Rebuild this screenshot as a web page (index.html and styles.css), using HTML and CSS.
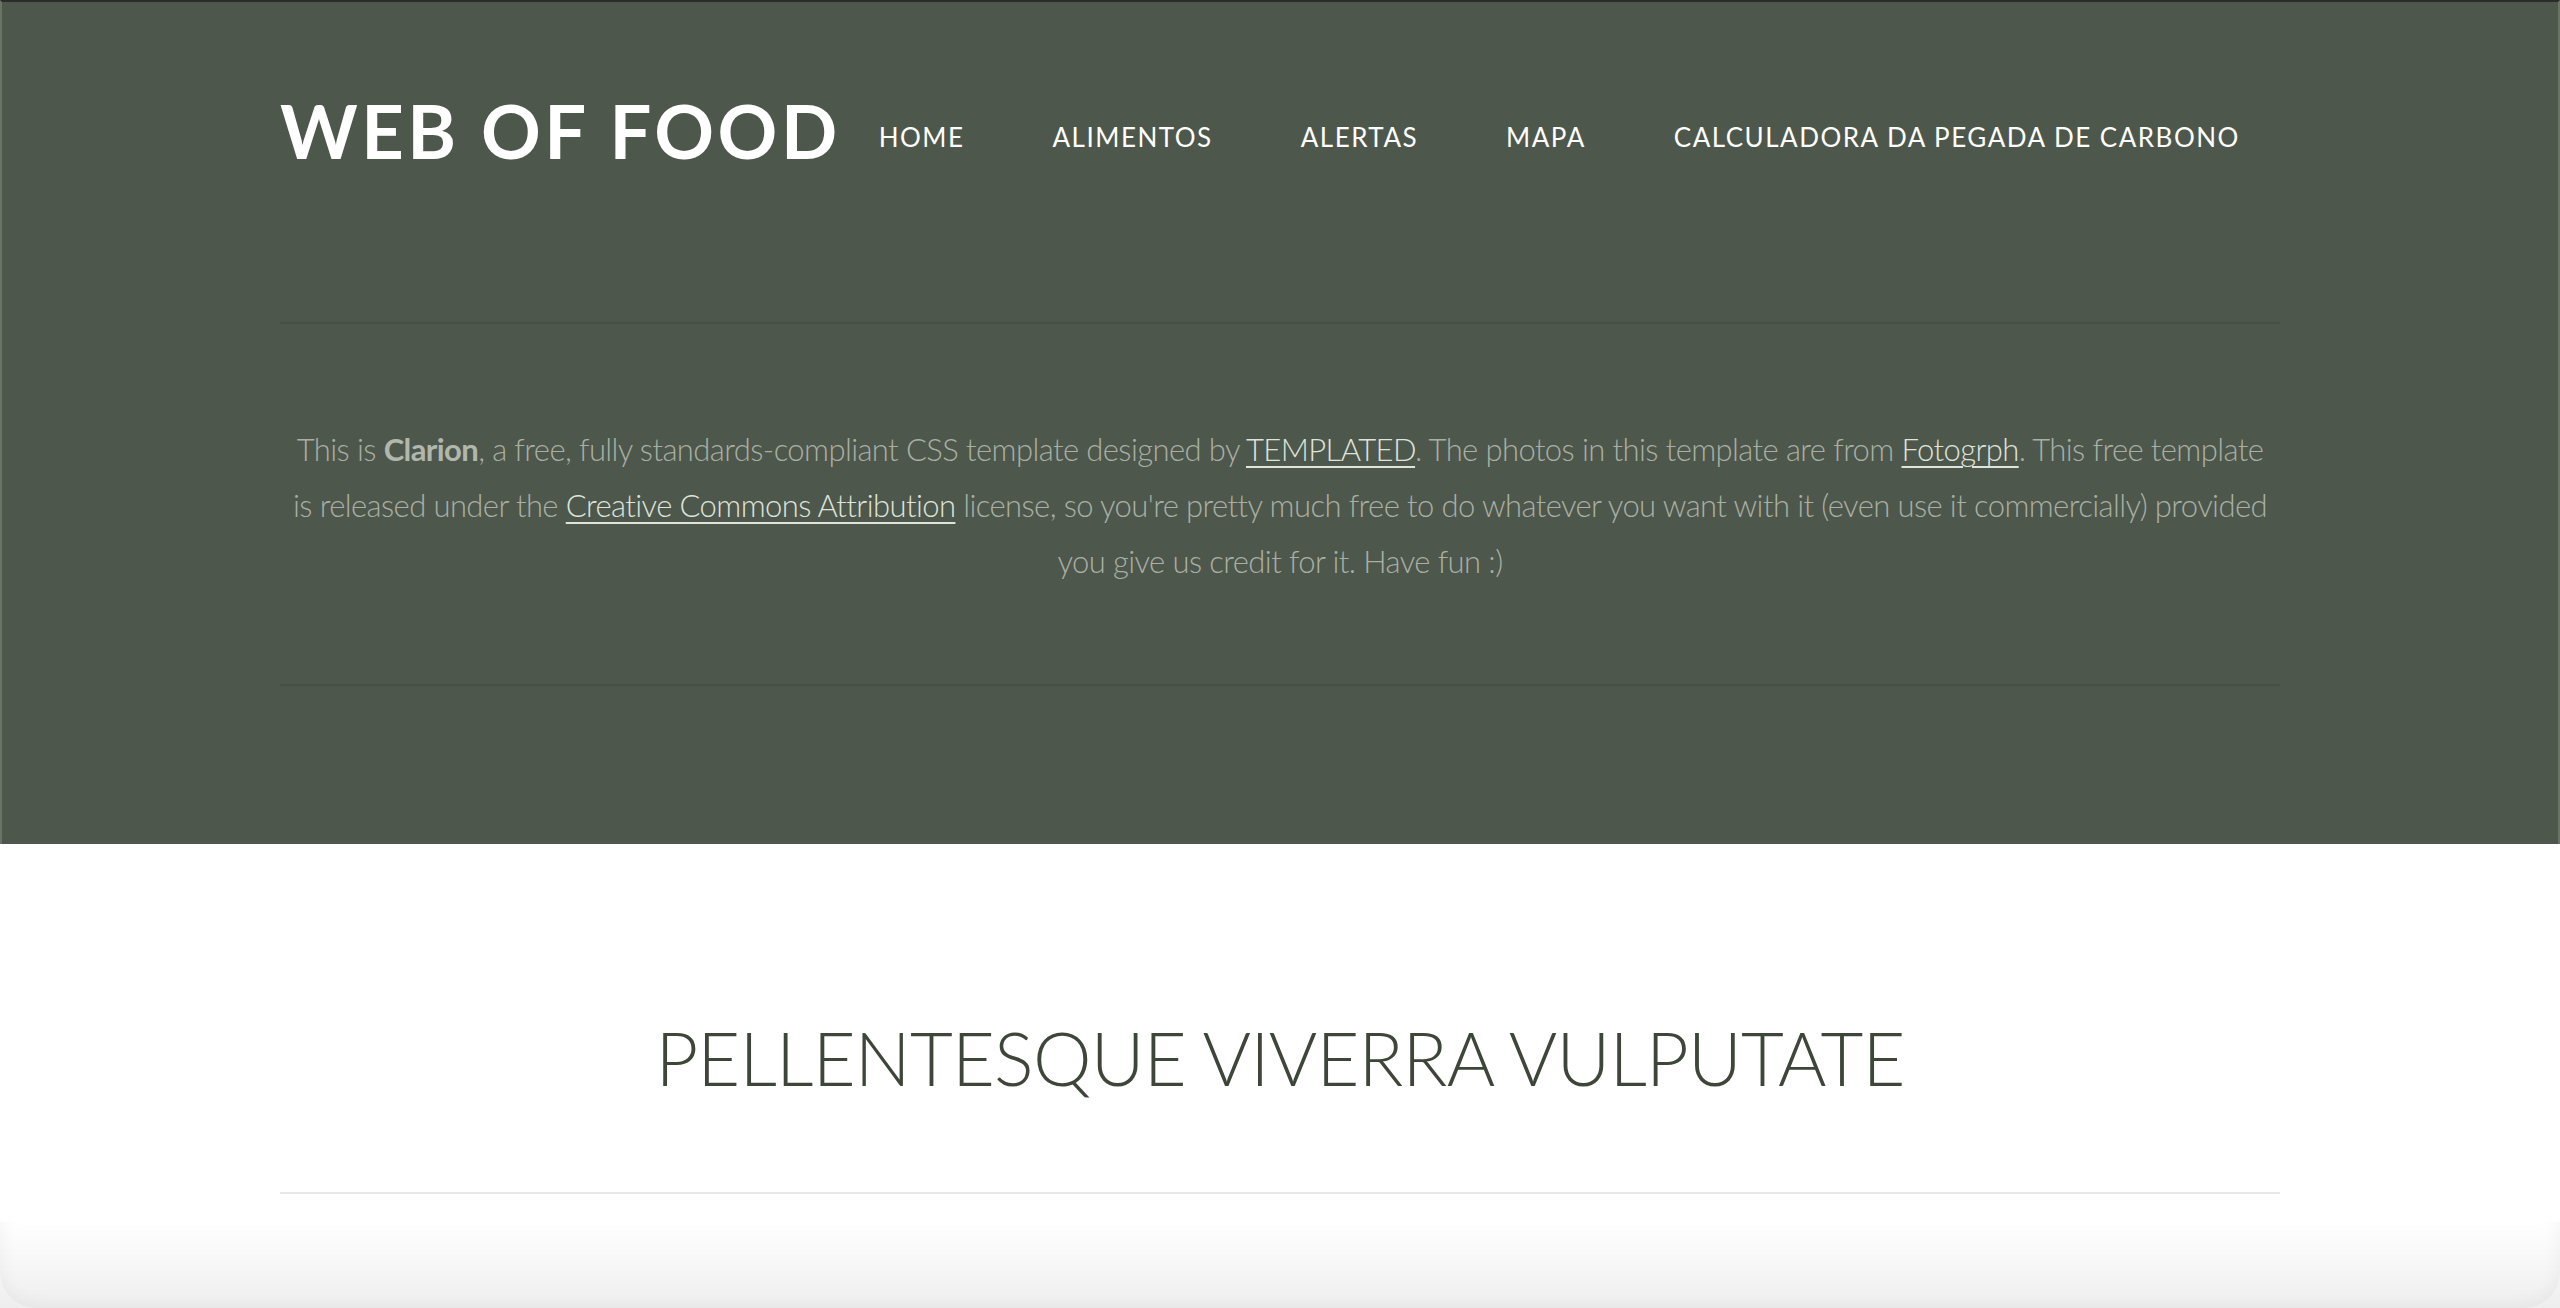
FILE: index.html
```html
<!DOCTYPE html>
<html lang="pt">
<head>
<meta charset="utf-8">
<title>Web of Food</title>
<link rel="stylesheet" href="styles.css">
</head>
<body>
<section class="banner">
  <div class="container">
    <header class="topbar">
      <h1 class="logo">WEB OF FOOD</h1>
      <nav class="nav">
        <a href="#">HOME</a>
        <a href="#">ALIMENTOS</a>
        <a href="#">ALERTAS</a>
        <a href="#">MAPA</a>
        <a href="#">CALCULADORA DA PEGADA DE CARBONO</a>
      </nav>
    </header>
    <hr class="rule">
    <p class="intro">This is <strong>Clarion</strong>, a free, fully standards-compliant CSS template designed by <a href="#">TEMPLATED</a>. The photos in this template are from <a href="#">Fotogrph</a>. This free template<br>is released under the <a href="#">Creative Commons Attribution</a> license, so you're pretty much free to do whatever you want with it (even use it commercially) provided<br>you give us credit for it. Have fun :)</p>
    <hr class="rule">
  </div>
</section>
<main class="main">
  <div class="container">
    <h2 class="title">PELLENTESQUE VIVERRA VULPUTATE</h2>
    <hr class="rule-light">
  </div>
</main>
<div class="shade"></div>
</body>
</html>
```
FILE: styles.css
```css
html, body {
  margin: 0;
  padding: 0;
  background: #ffffff;
}
body {
  font-family: "Lato", "Open Sans", sans-serif;
  overflow: hidden;
  height: 1308px;
}
.container {
  width: 2000px;
  margin: 0 auto;
}
.banner {
  background: #4e574b;
  border-top: 2px solid #2b2b2b;
  border-left: 2px solid #6b7365;
  border-right: 2px solid #6b7365;
  height: 844px;
  box-sizing: border-box;
  padding-top: 92px;
}
.topbar {
  display: flex;
  align-items: flex-start;
}
.logo {
  margin: 0;
  font-weight: 700;
  font-size: 74px;
  line-height: 74px;
  letter-spacing: 3.5px;
  color: #ffffff;
  white-space: nowrap;
}
.nav {
  margin-left: 38px;
  margin-top: 30px;
  display: flex;
  gap: 88px;
}
.nav a {
  color: #ffffff;
  text-decoration: none;
  font-size: 26px;
  line-height: 26px;
  letter-spacing: 1.5px;
  font-weight: 400;
  white-space: nowrap;
}
.rule {
  margin: 0;
  border: 0;
  height: 2px;
  background: #465043;
}
.banner .rule:first-of-type {
  margin-top: 154px;
}
.intro {
  margin: 97px 0 95px;
  font-size: 31px;
  line-height: 56px;
  letter-spacing: -0.6px;
  font-weight: 300;
  color: #a9afa5;
  text-align: center;
  white-space: nowrap;
}
.intro strong {
  font-weight: 700;
  color: #b2b7ae;
}
.intro a {
  color: #dfe3dc;
  text-decoration: underline;
  text-decoration-thickness: 2px;
  text-underline-offset: 5px;
}
.main {
  padding-top: 177px;
}
.title {
  margin: 0;
  font-size: 74px;
  line-height: 73px;
  font-weight: 300;
  letter-spacing: -0.8px;
  color: #3d4639;
  text-align: center;
}
.rule-light {
  margin: 98px 0 0;
  border: 0;
  height: 2px;
  background: #e8e8e8;
}
.shade {
  position: fixed;
  left: 0;
  right: 0;
  bottom: 0;
  height: 86px;
  pointer-events: none;
  overflow: hidden;
  background: linear-gradient(to bottom, rgba(0,0,0,0), rgba(0,0,0,0.065));
}
.shade::before {
  content: "";
  position: absolute;
  left: 0;
  right: 0;
  top: -200px;
  bottom: 0;
  border-radius: 0 0 36px 36px;
  box-shadow: inset 0 0 24px rgba(0,0,0,0.06);
}
```
